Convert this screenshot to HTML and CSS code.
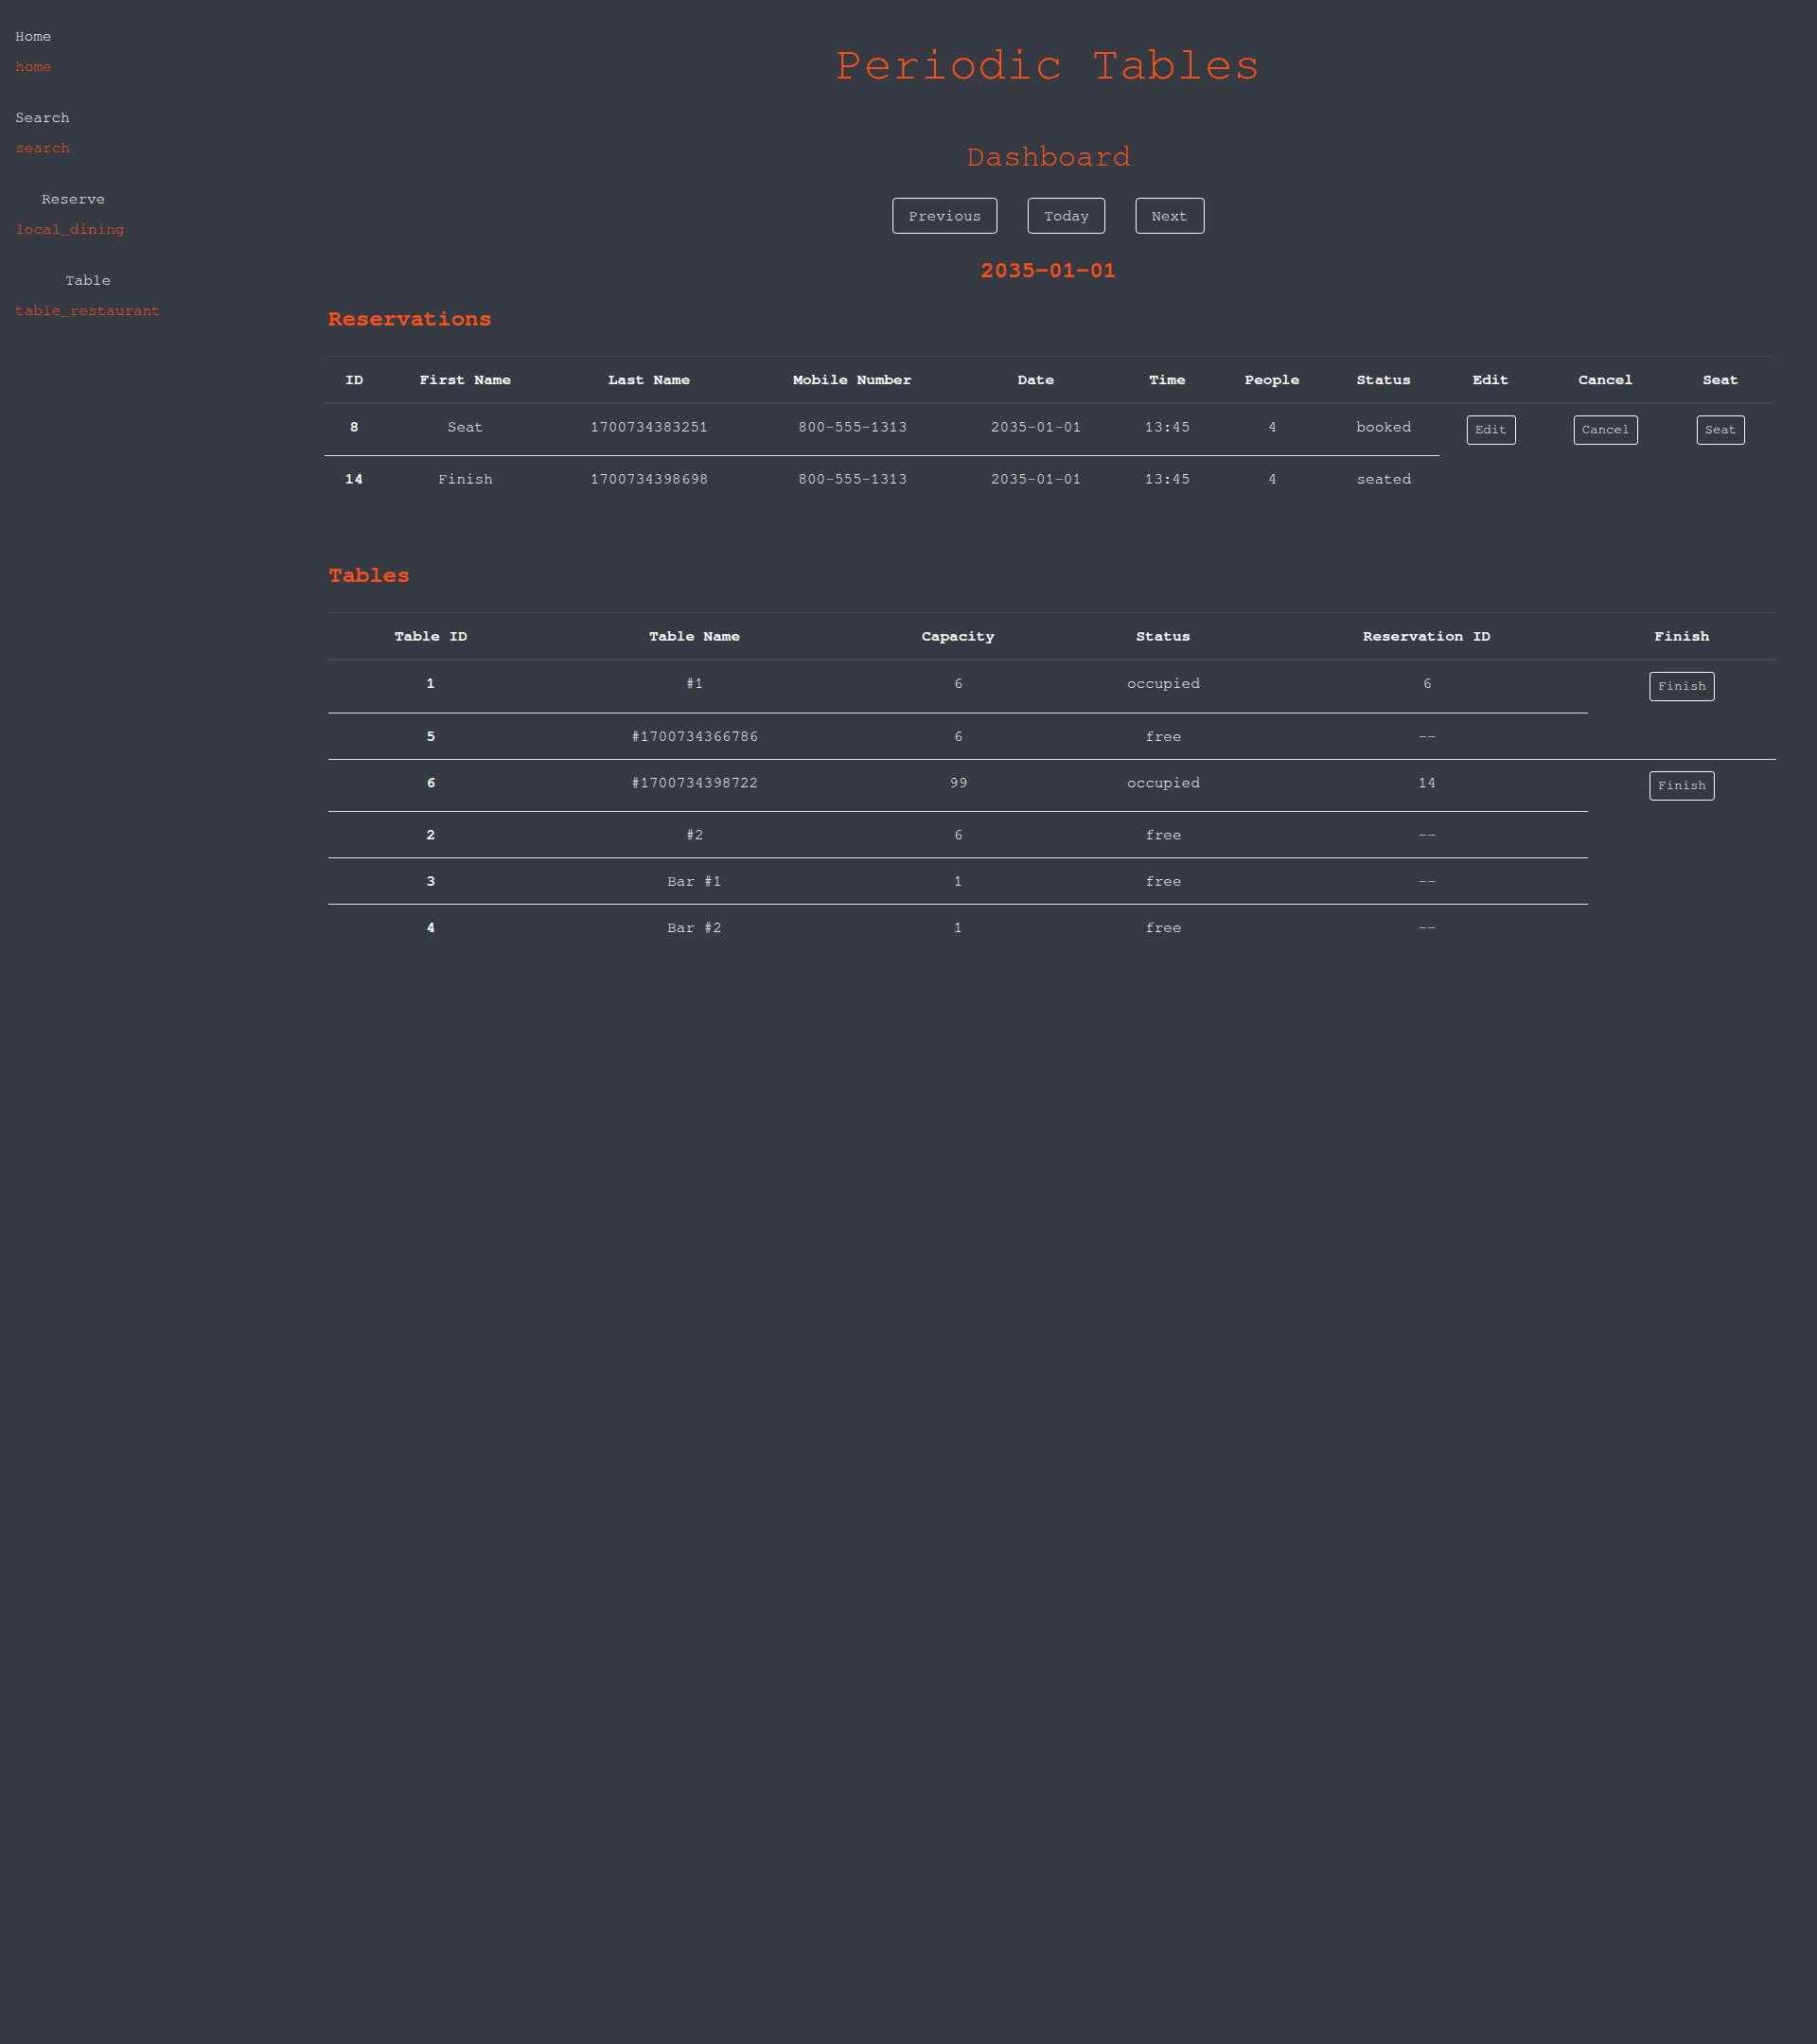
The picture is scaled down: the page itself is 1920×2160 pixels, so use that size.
FILE: index.html
```html
<!DOCTYPE html>
<html lang="en">
<head>
<meta charset="utf-8">
<title>Periodic Tables</title>
<link rel="stylesheet" href="styles.css">
</head>
<body>
<div class="layout">
  <nav class="sidebar">
    <a class="nav-item" href="#"><span class="nav-label">Home</span><span class="nav-icon">home</span></a>
    <a class="nav-item" href="#"><span class="nav-label">Search</span><span class="nav-icon">search</span></a>
    <a class="nav-item" href="#"><span class="nav-label indent-1">Reserve</span><span class="nav-icon">local_dining</span></a>
    <a class="nav-item" href="#"><span class="nav-label indent-2">Table</span><span class="nav-icon">table_restaurant</span></a>
  </nav>
  <main class="main">
    <h1 class="app-title">Periodic Tables</h1>
    <h2 class="page-title">Dashboard</h2>
    <div class="date-nav">
      <button class="btn" type="button">Previous</button>
      <button class="btn" type="button">Today</button>
      <button class="btn" type="button">Next</button>
    </div>
    <h4 class="current-date">2035-01-01</h4>

    <h4 class="section-title">Reservations</h4>
    <table class="data-table">
      <thead>
        <tr><th>ID</th><th>First Name</th><th>Last Name</th><th>Mobile Number</th><th>Date</th><th>Time</th><th>People</th><th>Status</th><th>Edit</th><th>Cancel</th><th>Seat</th></tr>
      </thead>
      <tbody>
        <tr><th>8</th><td>Seat</td><td>1700734383251</td><td>800-555-1313</td><td>2035-01-01</td><td>13:45</td><td>4</td><td>booked</td>
          <td><button class="btn btn-sm" type="button">Edit</button></td>
          <td><button class="btn btn-sm" type="button">Cancel</button></td>
          <td><button class="btn btn-sm" type="button">Seat</button></td></tr>
        <tr><th>14</th><td>Finish</td><td>1700734398698</td><td>800-555-1313</td><td>2035-01-01</td><td>13:45</td><td>4</td><td>seated</td></tr>
      </tbody>
    </table>

    <h4 class="section-title section-gap">Tables</h4>
    <table class="data-table shifted">
      <thead>
        <tr><th>Table ID</th><th>Table Name</th><th>Capacity</th><th>Status</th><th>Reservation ID</th><th>Finish</th></tr>
      </thead>
      <tbody>
        <tr><th>1</th><td>#1</td><td>6</td><td>occupied</td><td>6</td><td><button class="btn btn-sm" type="button">Finish</button></td></tr>
        <tr><th>5</th><td>#1700734366786</td><td>6</td><td>free</td><td>--</td></tr>
        <tr><th>6</th><td>#1700734398722</td><td>99</td><td>occupied</td><td>14</td><td><button class="btn btn-sm" type="button">Finish</button></td></tr>
        <tr><th>2</th><td>#2</td><td>6</td><td>free</td><td>--</td></tr>
        <tr><th>3</th><td>Bar #1</td><td>1</td><td>free</td><td>--</td></tr>
        <tr><th>4</th><td>Bar #2</td><td>1</td><td>free</td><td>--</td></tr>
      </tbody>
    </table>
  </main>
</div>
</body>
</html>
```

FILE: styles.css
```css
* { box-sizing: border-box; }

body {
  margin: 0;
  background: #363a42;
  color: #ffffff;
  font-family: "Nimbus Mono PS", "Nimbus Mono L", "FreeMono", Courier, "Courier New", "Liberation Mono", monospace;
  font-size: 16px;
  line-height: 1.5;
  min-height: 2160px;
}

.layout {
  display: grid;
  grid-template-columns: 328px 1fr;
}

/* Sidebar */
.sidebar {
  padding: 26px 0 0 16px;
}

.nav-item {
  display: block;
  text-decoration: none;
  margin-bottom: 30px;
}

.nav-label {
  display: block;
  color: #ffffff;
  margin-bottom: 8px;
}

.nav-label.indent-1 { padding-left: 28px; }
.nav-label.indent-2 { padding-left: 53px; }

.nav-icon {
  display: block;
  color: #f4511e;
}

/* Main */
.main {
  padding: 0 47px 0 15px;
}

.app-title {
  margin: 38px 0 0;
  font-size: 50px;
  line-height: 1.2;
  font-weight: 400;
  color: #f4511e;
  text-align: center;
}

.page-title {
  margin: 48px 0 0;
  font-size: 32px;
  line-height: 1.2;
  font-weight: 400;
  color: #f4511e;
  text-align: center;
}

.date-nav {
  display: flex;
  justify-content: center;
  gap: 32px;
  margin-top: 25px;
}

.btn {
  font-family: inherit;
  font-size: 16px;
  line-height: 24px;
  color: #f8f9fa;
  background: transparent;
  border: 1px solid #f8f9fa;
  border-radius: 4px;
  padding: 6px 16px;
  cursor: pointer;
}

.btn-sm {
  font-size: 14px;
  line-height: 21px;
  padding: 4px 8px;
  border-radius: 3px;
}

.current-date {
  margin: 25px 0 0;
  font-size: 24px;
  line-height: 1.2;
  font-weight: 700;
  color: #f4511e;
  text-align: center;
}

.section-title {
  margin: 22px 0 0 4px;
  font-size: 24px;
  line-height: 1.2;
  font-weight: 700;
  color: #f4511e;
}

.section-title.section-gap {
  margin-top: 64px;
}

/* Tables */
.data-table {
  width: 100%;
  border-collapse: collapse;
  margin-top: 24px;
  color: #ffffff;
}

.data-table.shifted {
  margin-left: 4px;
}

.data-table th,
.data-table td {
  padding: 12px;
  text-align: center;
  vertical-align: top;
  border-top: 1px solid #dee2e6;
}

.data-table thead th {
  border-top: 1px solid #454d55;
  border-bottom: 2px solid #454d55;
}

.data-table th {
  font-weight: 700;
}
```
